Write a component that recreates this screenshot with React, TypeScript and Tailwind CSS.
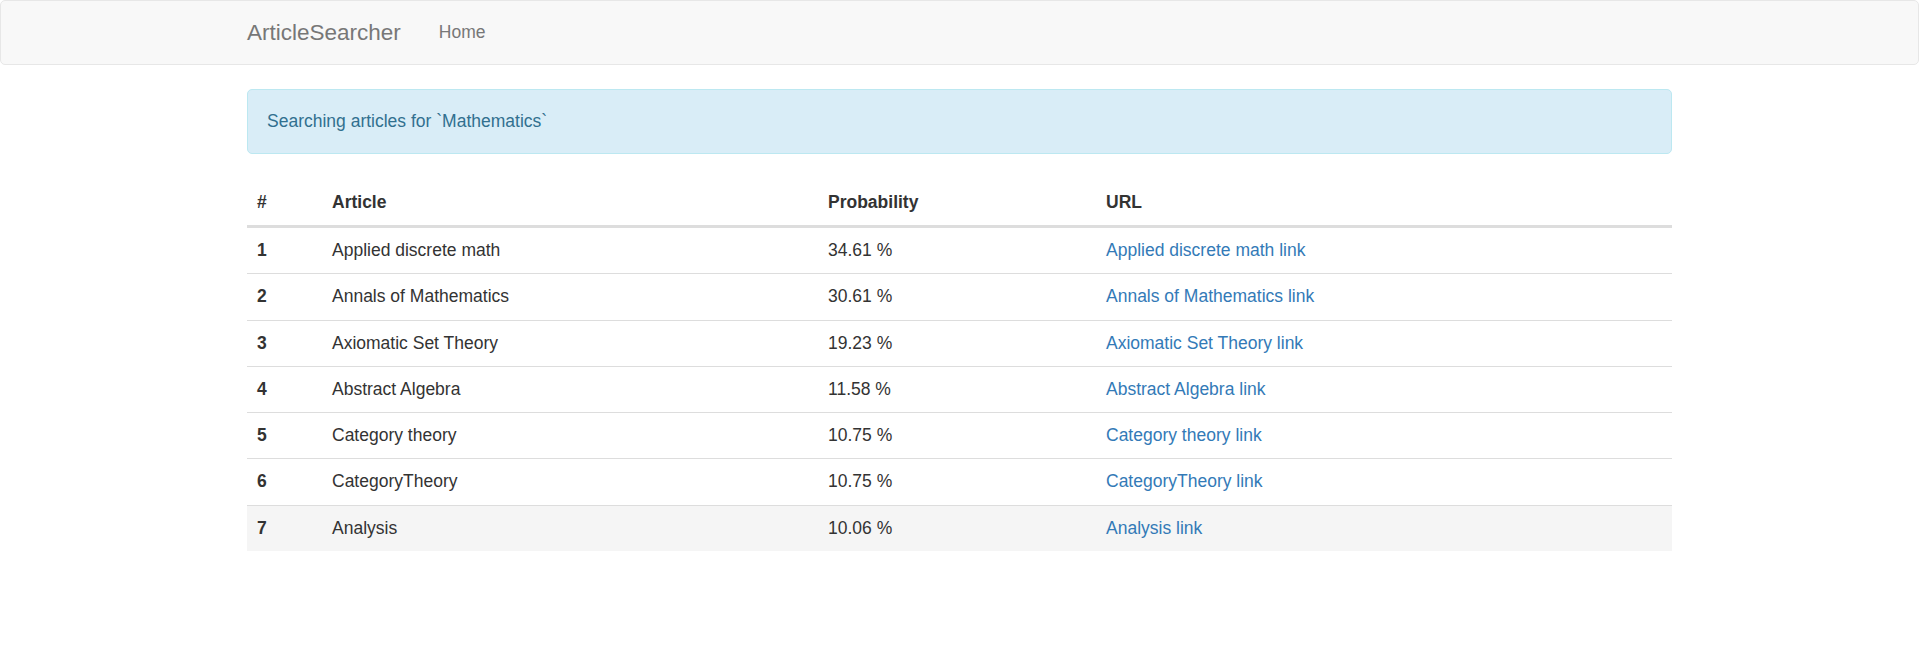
import React from "react";

const rows = [
  { id: 1, title: "Applied discrete math", prob: "34.61 %" },
  { id: 2, title: "Annals of Mathematics", prob: "30.61 %" },
  { id: 3, title: "Axiomatic Set Theory", prob: "19.23 %" },
  { id: 4, title: "Abstract Algebra", prob: "11.58 %" },
  { id: 5, title: "Category theory", prob: "10.75 %" },
  { id: 6, title: "CategoryTheory", prob: "10.75 %" },
  { id: 7, title: "Analysis", prob: "10.06 %" },
];

const App = () => {
  return (
    <div className="min-h-screen bg-white font-['Liberation_Sans',Arial,sans-serif] text-[17.5px] leading-[25px] text-[#333]">
      <nav className="h-[65px] rounded-[5px] border border-[#e7e7e7] bg-[#f8f8f8]">
        <div className="mx-auto flex h-full w-[1425px] items-center gap-[38px]">
          <a href="#" className="text-[22.5px] leading-[25px] text-[#777]">
            ArticleSearcher
          </a>
          <a href="#" className="text-[17.5px] leading-[25px] text-[#777]">
            Home
          </a>
        </div>
      </nav>

      <div className="mx-auto mt-[24px] w-[1425px]">
        <div className="flex h-[65px] items-center rounded-[5px] border border-[#bce8f1] bg-[#d9edf7] px-[19px] text-[#31708f]">
          Searching articles for `Mathematics`
        </div>

        <table className="mt-[25px] w-full border-collapse text-left">
          <thead>
            <tr className="border-b-[3px] border-[#ddd]">
              <th className="w-[75px] px-[10px] pt-[11px] pb-[10px] font-bold">#</th>
              <th className="w-[496px] px-[10px] pt-[11px] pb-[10px] font-bold">Article</th>
              <th className="w-[278px] px-[10px] pt-[11px] pb-[10px] font-bold">Probability</th>
              <th className="px-[10px] pt-[11px] pb-[10px] font-bold">URL</th>
            </tr>
          </thead>
          <tbody className="leading-[25.25px]">
            {rows.map((row, index) => (
              <tr
                key={row.id}
                className={
                  (index === 0 ? "" : "border-t border-[#ddd] ") +
                  (row.id === 7 ? "bg-[#f5f5f5]" : "")
                }
              >
                <th className="px-[10px] py-[10px] font-bold">{row.id}</th>
                <td className="px-[10px] py-[10px]">{row.title}</td>
                <td className="px-[10px] py-[10px]">{row.prob}</td>
                <td className="px-[10px] py-[10px]">
                  <a href="#" className="text-[#337ab7]">
                    {row.title} link
                  </a>
                </td>
              </tr>
            ))}
          </tbody>
        </table>
      </div>
    </div>
  );
};

export default App;
